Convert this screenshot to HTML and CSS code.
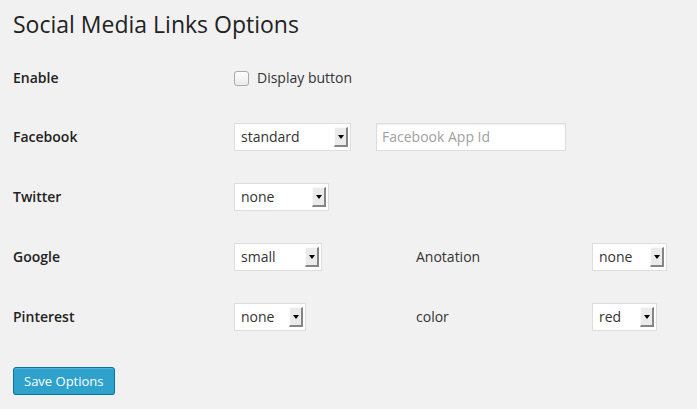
FILE: index.html
```html
<!DOCTYPE html>
<html lang="en">
<head>
<meta charset="utf-8">
<title>Social Media Links Options</title>
<link rel="stylesheet" href="styles.css">
</head>
<body>
<div class="wrap">
  <h2 class="title">Social Media Links Options</h2>
  <form class="options">
    <div class="row row-first">
      <div class="label">Enable</div>
      <label class="check"><span class="checkbox"></span><span class="check-text">Display button</span></label>
    </div>
    <div class="row">
      <div class="label">Facebook</div>
      <div class="pair">
        <div class="select w-standard"><span class="value">standard</span><span class="arrow"></span></div>
        <div class="input"><span class="placeholder">Facebook App Id</span></div>
      </div>
    </div>
    <div class="row">
      <div class="label">Twitter</div>
      <div class="select w-twitter"><span class="value">none</span><span class="arrow"></span></div>
    </div>
    <div class="row">
      <div class="label">Google</div>
      <div class="select w-small"><span class="value">small</span><span class="arrow"></span></div>
      <div class="sublabel">Anotation</div>
      <div class="select w-anot"><span class="value">none</span><span class="arrow"></span></div>
    </div>
    <div class="row">
      <div class="label">Pinterest</div>
      <div class="select w-pin"><span class="value">none</span><span class="arrow"></span></div>
      <div class="sublabel">color</div>
      <div class="select w-red"><span class="value">red</span><span class="arrow"></span></div>
    </div>
    <div class="actions">
      <button type="button" class="button-primary">Save Options</button>
    </div>
  </form>
</div>
</body>
</html>
```
FILE: styles.css
```css
html, body {
  margin: 0;
  background: #f1f1f1;
}
body {
  font-family: "Open Sans", "Liberation Sans", sans-serif;
  color: #333;
  padding: 10px 13px 0;
}
.title {
  margin: 0 0 10px;
  font-size: 23px;
  line-height: 29px;
  font-weight: 400;
  color: #222;
}
.row {
  display: grid;
  grid-template-columns: 221px 182px 176px auto;
  align-items: center;
  height: 28px;
  padding: 16px 0;
}
.row-first {
  height: 26px;
}
.label {
  font-size: 14px;
  font-weight: 600;
  color: #222;
  padding-bottom: 2px;
}
.sublabel {
  font-size: 14px;
  color: #333;
  padding-bottom: 2px;
}
.check {
  display: flex;
  align-items: center;
  gap: 8px;
  font-size: 14px;
  color: #333;
  grid-column: 2 / 5;
}
.check-text {
  padding-bottom: 2px;
}
.checkbox {
  width: 13px;
  height: 13px;
  border: 1px solid #a9a9a9;
  border-radius: 3px;
  background: linear-gradient(#fdfdfd, #ececec);
}
.pair {
  grid-column: 2 / 5;
  display: flex;
  align-items: center;
  gap: 25px;
}
.select {
  box-sizing: border-box;
  height: 28px;
  border: 1px solid #ddd;
  background: #fff;
  display: flex;
  align-items: center;
  justify-content: space-between;
  padding: 0 2px 0 6px;
  font-size: 14px;
  color: #333;
}
.value {
  padding-bottom: 2px;
}
.w-standard { width: 117px; }
.w-twitter { width: 95px; }
.w-small { width: 88px; }
.w-anot { width: 75px; }
.w-pin { width: 72px; }
.w-red { width: 65px; }
.arrow {
  box-sizing: border-box;
  width: 14px;
  height: 20px;
  background: #ebebeb;
  border-right: 2px solid #858585;
  border-bottom: 2px solid #858585;
  border-top: 1px solid #fafafa;
  border-left: 1px solid #fafafa;
  display: flex;
  align-items: center;
  justify-content: center;
}
.arrow::after {
  content: "";
  width: 0;
  height: 0;
  border-left: 3.5px solid transparent;
  border-right: 3.5px solid transparent;
  border-top: 4px solid #000;
  margin-top: 1px;
}
.input {
  box-sizing: border-box;
  width: 190px;
  height: 28px;
  border: 1px solid #ddd;
  background: #fff;
  box-shadow: inset 0 1px 2px rgba(0,0,0,.07);
  display: flex;
  align-items: center;
  padding: 0 5px 2px;
  font-size: 14px;
}
.placeholder {
  color: #a0a0a0;
}
.actions {
  margin-top: 20px;
}
.button-primary {
  box-sizing: border-box;
  height: 28px;
  padding: 0 10px 1px;
  font-family: inherit;
  font-size: 13px;
  line-height: 26px;
  color: #fff;
  background: #2ea2cc;
  border: 1px solid #0074a2;
  border-radius: 3px;
  box-shadow: inset 0 1px 0 rgba(120,200,230,.5), 0 1px 0 rgba(0,0,0,.15);
  cursor: pointer;
}
```
